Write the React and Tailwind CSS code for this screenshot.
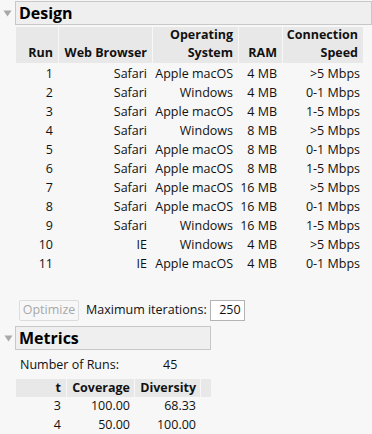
import React from "react";

const rows = [
  [1, "Safari", "Apple macOS", "4 MB", ">5 Mbps"],
  [2, "Safari", "Windows", "4 MB", "0-1 Mbps"],
  [3, "Safari", "Apple macOS", "4 MB", "1-5 Mbps"],
  [4, "Safari", "Windows", "8 MB", ">5 Mbps"],
  [5, "Safari", "Apple macOS", "8 MB", "0-1 Mbps"],
  [6, "Safari", "Apple macOS", "8 MB", "1-5 Mbps"],
  [7, "Safari", "Apple macOS", "16 MB", ">5 Mbps"],
  [8, "Safari", "Apple macOS", "16 MB", "0-1 Mbps"],
  [9, "Safari", "Windows", "16 MB", "1-5 Mbps"],
  [10, "IE", "Windows", "4 MB", ">5 Mbps"],
  [11, "IE", "Apple macOS", "4 MB", "0-1 Mbps"],
];

function Tri() {
  return (
    <svg width="9" height="7" viewBox="0 0 9 7" className="shrink-0">
      <path d="M0.5 0.5 L8.5 0.5 L4.5 6.5 Z" fill="#a8a8a8" />
    </svg>
  );
}

function Outline({ title, width }) {
  return (
    <div className="flex items-center h-[24px]">
      <div className="w-[15px] flex justify-center pl-[1px]">
        <Tri />
      </div>
      <div
        className={`h-[24px] border border-[#c8c8c8] bg-[#efefef] flex items-center pl-[3px] text-[16px] font-bold text-black ${width}`}
      >
        {title}
      </div>
    </div>
  );
}

export default function App() {
  return (
    <div
      className="w-[372px] h-[434px] bg-[#f7f7f7] overflow-hidden text-[12.5px] text-[#111] relative"
      style={{ fontFamily: '"Open Sans", "Noto Sans", sans-serif' }}
    >
      <div className="pt-[1px]">
        <Outline title="Design" width="w-[360px]" />
      </div>
      {/* design table */}
      <div className="ml-[16px] mt-[2px] w-[347px]">
        <div className="grid grid-cols-[42px_93px_85px_43px_80px] gap-x-px">
          <div className="bg-[#e8e8e8] h-[36px] flex items-end justify-end pr-[5px] pb-[1px] font-bold leading-[18px]">Run</div>
          <div className="bg-[#e8e8e8] h-[36px] flex items-end justify-end pr-[5px] pb-[1px] font-bold leading-[18px]">Web Browser</div>
          <div className="bg-[#e8e8e8] h-[36px] flex flex-col items-end justify-end pr-[5px] pb-[1px] font-bold leading-[18px]">
            <span>Operating</span>
            <span>System</span>
          </div>
          <div className="bg-[#e8e8e8] h-[36px] flex items-end justify-end pr-[5px] pb-[1px] font-bold leading-[18px]">RAM</div>
          <div className="bg-[#e8e8e8] h-[36px] flex flex-col items-end justify-end pr-[5px] pb-[1px] font-bold leading-[18px]">
            <span>Connection</span>
            <span>Speed</span>
          </div>
        </div>
        <div className="mt-[1px]">
          {rows.map((r) => (
            <div key={r[0]} className="grid grid-cols-[42px_93px_85px_43px_80px] gap-x-px h-[19px] items-center leading-[19px]">
              <div className="text-right pr-[5px]">{r[0]}</div>
              <div className="text-right pr-[5px]">{r[1]}</div>
              <div className="text-right pr-[5px] whitespace-nowrap">{r[2]}</div>
              <div className="text-right pr-[5px] whitespace-nowrap">{r[3]}</div>
              <div className="text-right pr-[3px] whitespace-nowrap">{r[4]}</div>
            </div>
          ))}
        </div>
      </div>
      {/* optimize row */}
      <div className="flex items-center mt-[27px] ml-[19px] h-[21px]">
        <div className="h-[21px] w-[60px] border border-[#dcdcdc] rounded-[2px] bg-[#f7f7f7] flex items-center justify-center text-[#a8a8a8]">
          Optimize
        </div>
        <span className="ml-[7px] whitespace-nowrap">Maximum iterations:</span>
        <div className="ml-[3px] h-[21px] w-[35px] border border-[#b4b4b4] bg-white flex items-center justify-end pr-[3px]">
          250
        </div>
      </div>
      <div className="mt-[5px]">
        <Outline title="Metrics" width="w-[196px]" />
      </div>
      <div className="flex items-center ml-[20px] mt-[5px] h-[20px]">
        <span className="w-[143px]">Number of Runs:</span>
        <span>45</span>
      </div>
      <div className="ml-[16px] mt-[4px]">
        <div className="grid grid-cols-[50px_67px_65px_10px] gap-x-px">
          <div className="bg-[#e8e8e8] h-[18px] flex items-center justify-end pr-[5px] font-bold">t</div>
          <div className="bg-[#e8e8e8] h-[18px] flex items-center justify-end pr-[4px] font-bold">Coverage</div>
          <div className="bg-[#e8e8e8] h-[18px] flex items-center justify-end pr-[4px] font-bold">Diversity</div>
          <div className="bg-[#e8e8e8] h-[18px]"></div>
        </div>
        {[
          ["3", "100.00", "68.33"],
          ["4", "50.00", "100.00"],
        ].map((r) => (
          <div key={r[0]} className="grid grid-cols-[50px_67px_65px_10px] gap-x-px h-[19px] items-center">
            <div className="text-right pr-[5px]">{r[0]}</div>
            <div className="text-right pr-[4px]">{r[1]}</div>
            <div className="text-right pr-[4px]">{r[2]}</div>
            <div></div>
          </div>
        ))}
      </div>
    </div>
  );
}
